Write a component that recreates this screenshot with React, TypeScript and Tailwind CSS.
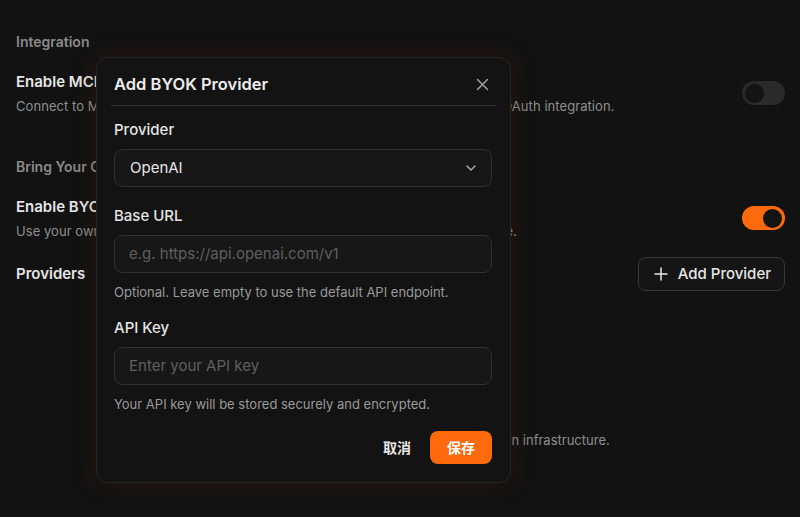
import React from "react";

const font = { fontFamily: "Inter, 'Noto Sans', 'Noto Sans CJK SC', sans-serif" };

function Toggle({ on }: { on: boolean }) {
  return (
    <div
      className={`flex h-[24px] w-[43px] shrink-0 items-center rounded-full p-[3px] ${
        on ? "justify-end bg-[#ff6a0d]" : "justify-start bg-[#2a2a2a]"
      }`}
    >
      <div className="h-[19px] w-[19px] rounded-full bg-[#141414]" />
    </div>
  );
}

function Field({
  label,
  placeholder,
  help,
  top,
}: {
  label: string;
  placeholder: string;
  help: string;
  top: string;
}) {
  return (
    <div className={top}>
      <div className="text-[15px] font-medium leading-[22px] text-[#e4e4e4]">{label}</div>
      <div className="mt-[8px] flex h-[38px] items-center rounded-[8px] border border-[#2f2f2f] bg-[#171717] px-[14px] text-[15px] text-[#5f5f5f]">
        {placeholder}
      </div>
      <div className="mt-[10px] text-[13px] leading-[18px] text-[#9a9a9a]">{help}</div>
    </div>
  );
}

export default function App() {
  return (
    <div className="relative h-[517px] w-[800px] overflow-hidden bg-[#121212]" style={font}>
      {/* Settings page */}
      <div className="pl-4 pr-[15px] pt-[32px]">
        <div className="text-[14px] font-semibold leading-[20px] text-[#8a8a8a]">Integration</div>
        <div className="mt-[19px] flex items-center justify-between">
          <div>
            <div className="text-[15px] font-semibold leading-[22px] text-[#e6e6e6]">Enable MCP Servers</div>
            <div className="mt-[4px] text-[13px] leading-[18px] tracking-[0.06px] text-[#8f8f8f]">
              Connect to Model Context Protocol servers for external tools, with support for OAuth integration.
            </div>
          </div>
          <Toggle on={false} />
        </div>

        <div className="mt-[42px] text-[14px] font-semibold leading-[20px] text-[#8a8a8a]">
          Bring Your Own Key (BYOK)
        </div>
        <div className="mt-[19px] flex items-center justify-between">
          <div>
            <div className="text-[15px] font-semibold leading-[22px] text-[#e6e6e6]">Enable BYOK</div>
            <div className="mt-[4px] text-[13px] leading-[18px] tracking-[0.05px] text-[#8f8f8f]">
              Use your own API keys via third-party providers instead of the built-in AI service.
            </div>
          </div>
          <Toggle on={true} />
        </div>

        <div className="mt-[17px] flex items-center justify-between">
          <div className="text-[15px] font-semibold leading-[22px] text-[#e6e6e6]">Providers</div>
          <button className="flex h-[34px] items-center gap-[10px] rounded-[8px] border border-[#383838] bg-[#151515] pl-[15px] pr-[13px] text-[15px] font-medium text-[#e6e6e6]">
            <svg width="14" height="14" viewBox="0 0 14 14" fill="none" stroke="#e6e6e6" strokeWidth="1.5" strokeLinecap="round">
              <path d="M7 1v12M1 7h12" />
            </svg>
            Add Provider
          </button>
        </div>

        <div className="mt-[116px] text-center text-[13px] leading-[18px] text-[#8f8f8f]">
          No providers configured
        </div>
        <div className="mt-[6px] text-center text-[13px] leading-[18px] text-[#8f8f8f]">
          Add a provider to route all requests through your own infrastructure.
        </div>
      </div>

      {/* Dialog */}
      <div className="absolute left-[96px] top-[57px] w-[415px] rounded-[12px] border border-[#262626] bg-[#131313] shadow-[0_0_24px_rgba(80,28,8,0.35)]">
        <div className="flex items-center justify-between pl-[17px] pr-[18px] pt-[14px] pb-[9px]">
          <div className="text-[16.5px] font-semibold leading-[24px] text-[#ececec]">Add BYOK Provider</div>
          <svg width="13" height="13" viewBox="0 0 13 13" fill="none" stroke="#a0a0a0" strokeWidth="1.5" strokeLinecap="round" className="mr-[3px]">
            <path d="M1.5 1.5l10 10M11.5 1.5l-10 10" />
          </svg>
        </div>
        <div className="mx-[14px] h-px bg-[#333333]" />

        <div className="pl-[17px] pr-[18px] pb-[18px]">
          <div className="mt-[13px]">
            <div className="text-[15px] font-medium leading-[22px] text-[#e4e4e4]">Provider</div>
            <div className="mt-[8px] flex h-[38px] items-center justify-between rounded-[8px] border border-[#2f2f2f] bg-[#171717] pl-[15px] pr-[14px] text-[15px] text-[#e6e6e6]">
              OpenAI
              <svg width="12" height="8" viewBox="0 0 12 8" fill="none" stroke="#a8a8a8" strokeWidth="1.5" strokeLinecap="round" strokeLinejoin="round">
                <path d="M2 2l4 4 4-4" />
              </svg>
            </div>
          </div>

          <Field
            top="mt-[18px]"
            label="Base URL"
            placeholder="e.g. https://api.openai.com/v1"
            help="Optional. Leave empty to use the default API endpoint."
          />
          <Field
            top="mt-[16px]"
            label="API Key"
            placeholder="Enter your API key"
            help="Your API key will be stored securely and encrypted."
          />

          <div className="mt-[18px] flex items-center justify-end gap-[19px]">
            <button className="text-[14px] font-semibold text-[#e6e6e6]">取消</button>
            <button className="flex h-[33px] w-[62px] items-center justify-center rounded-[8px] bg-[#ff6a0d] text-[14px] font-semibold text-white">
              保存
            </button>
          </div>
        </div>
      </div>
    </div>
  );
}
